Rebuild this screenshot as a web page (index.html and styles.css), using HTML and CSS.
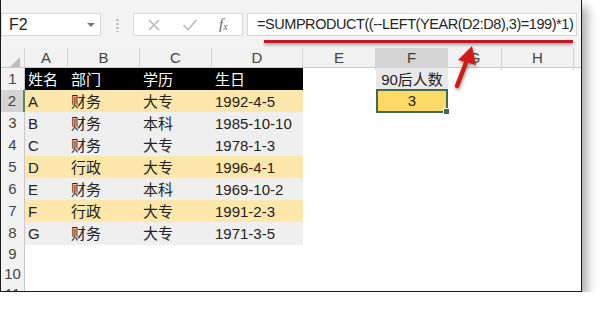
FILE: index.html
```html
<!DOCTYPE html>
<html lang="zh-CN">
<head>
  <meta charset="UTF-8">
  <title>90后人数</title>
  <link rel="stylesheet" href="styles.css">
</head>
<body>
  <div class="window">
    <div class="toolbar">
      <div class="namebox">
        <span class="cellref">F2</span>
        <span class="caret"></span>
      </div>
      <div class="grip"></div>
      <div class="fxbox">
        <svg class="icon" width="14" height="14" viewBox="0 0 14 14">
          <path d="M2 2 L12 12 M12 2 L2 12" stroke="#b9b9b9" stroke-width="1.6" fill="none"/>
        </svg>
        <svg class="icon" width="16" height="14" viewBox="0 0 16 14">
          <path d="M1.5 7 L6 11.5 L14.5 2" stroke="#b9b9b9" stroke-width="1.6" fill="none"/>
        </svg>
        <span class="fx">f<sub>x</sub></span>
      </div>
      <div class="formula">=SUMPRODUCT((--LEFT(YEAR(D2:D8),3)=199)*1)</div>
    </div>

    <div class="sheet">
      <div class="row head">
        <div class="corner"><span class="tri"></span></div>
        <div class="col">A</div>
        <div class="col">B</div>
        <div class="col">C</div>
        <div class="col">D</div>
        <div class="col">E</div>
        <div class="col active">F</div>
        <div class="col">G</div>
        <div class="col">H</div>
        <div class="col last"></div>
      </div>
      <div class="row">
        <div class="num">1</div>
        <div class="cell dark">姓名</div>
        <div class="cell dark">部门</div>
        <div class="cell dark">学历</div>
        <div class="cell dark">生日</div>
        <div class="cell"></div>
        <div class="cell label">90后人数</div>
      </div>
      <div class="row">
        <div class="num active">2</div>
        <div class="cell gold">A</div>
        <div class="cell gold">财务</div>
        <div class="cell gold">大专</div>
        <div class="cell gold">1992-4-5</div>
        <div class="cell"></div>
        <div class="cell result">3<span class="handle"></span></div>
      </div>
      <div class="row">
        <div class="num">3</div>
        <div class="cell grey">B</div>
        <div class="cell grey">财务</div>
        <div class="cell grey">本科</div>
        <div class="cell grey">1985-10-10</div>
      </div>
      <div class="row">
        <div class="num">4</div>
        <div class="cell grey">C</div>
        <div class="cell grey">财务</div>
        <div class="cell grey">大专</div>
        <div class="cell grey">1978-1-3</div>
      </div>
      <div class="row">
        <div class="num">5</div>
        <div class="cell gold">D</div>
        <div class="cell gold">行政</div>
        <div class="cell gold">大专</div>
        <div class="cell gold">1996-4-1</div>
      </div>
      <div class="row">
        <div class="num">6</div>
        <div class="cell grey">E</div>
        <div class="cell grey">财务</div>
        <div class="cell grey">本科</div>
        <div class="cell grey">1969-10-2</div>
      </div>
      <div class="row">
        <div class="num">7</div>
        <div class="cell gold">F</div>
        <div class="cell gold">行政</div>
        <div class="cell gold">大专</div>
        <div class="cell gold">1991-2-3</div>
      </div>
      <div class="row">
        <div class="num">8</div>
        <div class="cell grey">G</div>
        <div class="cell grey">财务</div>
        <div class="cell grey">大专</div>
        <div class="cell grey">1971-3-5</div>
      </div>
      <div class="row short"><div class="num">9</div></div>
      <div class="row short"><div class="num">10</div></div>
      <div class="row short"><div class="num">11</div></div>
    </div>

    <!-- annotation drawn over the screenshot -->
    <div class="underline"></div>
    <svg class="arrow" width="40" height="60" viewBox="0 0 40 60">
      <path d="M8 48 L18 22" stroke="#d11a1a" stroke-width="4.5" stroke-linecap="round" fill="none"/>
      <path d="M23 8 L9 22 L27 27 Z" fill="#d11a1a"/>
    </svg>
  </div>
</body>
</html>
```

FILE: styles.css
```css
body {
  margin: 0;
  background-color: #fff;
  font-family: "Liberation Sans", "Noto Sans CJK SC", sans-serif;
  color: #222;
}

.window {
  position: relative;
  width: 580px;
  height: 291px;
  border: 1px solid #1b1b1b;
  border-top: 0;
  background-color: #fff;
  box-shadow: 5px 7px 10px rgba(0, 0, 0, 0.35);
  overflow: hidden;
}

/* formula bar */
.toolbar {
  display: flex;
  align-items: flex-start;
  height: 48px;
  padding-top: 13px;
  box-sizing: border-box;
  background-color: #f3f3f3;
}

.namebox,
.fxbox,
.formula {
  height: 23px;
  box-sizing: border-box;
  background-color: #fff;
  border: 1px solid #d8d8d8;
}

.namebox {
  display: flex;
  align-items: center;
  justify-content: space-between;
  width: 100px;
  padding: 0 5px 0 7px;
}

.cellref {
  font-size: 16px;
}

.caret {
  width: 0;
  height: 0;
  border-left: 4px solid transparent;
  border-right: 4px solid transparent;
  border-top: 4px solid #777;
}

.grip {
  width: 3px;
  height: 14px;
  margin: 5px 0 0 15px;
  background: radial-gradient(circle, #b5b5b5 1px, transparent 1.3px) 0 0 / 3px 4px;
}

.fxbox {
  display: flex;
  align-items: center;
  width: 110px;
  margin-left: 14px;
  padding-left: 13px;
  gap: 21px;
}

.fx {
  font-family: "Liberation Serif", serif;
  font-style: italic;
  font-size: 15px;
  color: #666;
}

.fx sub {
  font-size: 10px;
  vertical-align: -1px;
}

.formula {
  width: 330px;
  margin-left: 4px;
  padding-left: 9px;
  font-size: 14.5px;
  letter-spacing: -0.45px;
  line-height: 21px;
  color: #262626;
  white-space: nowrap;
}

/* worksheet */
.sheet {
  height: 243px;
  overflow: hidden;
}

.row {
  display: grid;
  grid-template-columns: 24px 43px 72px 72px 91px 73px 72px 54px 72px 1fr;
  height: 22px;
  font-size: 15px;
}

.row.short {
  height: 20px;
}

.row.head {
  height: 20px;
  background-color: #f2f2f2;
  border-bottom: 1px solid #c8c8c8;
  box-sizing: border-box;
}

.corner {
  position: relative;
  border-right: 1px solid #d4d4d4;
}

.tri {
  position: absolute;
  right: 4px;
  bottom: 3px;
  width: 0;
  height: 0;
  border-left: 10px solid transparent;
  border-bottom: 10px solid #bdbdbd;
}

.col {
  text-align: center;
  line-height: 20px;
  color: #444;
  border-right: 1px solid #d4d4d4;
}

.col.active {
  background-color: #d4d4d4;
  border-bottom: 2px solid #5f7f67;
  color: #3c3c3c;
}

.col.last {
  border-right: 0;
}

.num {
  text-align: center;
  line-height: 22px;
  color: #444;
  background-color: #f2f2f2;
  border-right: 1px solid #c8c8c8;
  border-bottom: 1px solid #dcdcdc;
  box-sizing: border-box;
}

.short .num {
  line-height: 20px;
}

.num.active {
  background-color: #d4d4d4;
  border-right: 2px solid #5f7f67;
}

.cell {
  padding-left: 3px;
  line-height: 23px;
  white-space: nowrap;
}

.dark {
  background-color: #000;
  color: #fff;
}

.gold {
  background-color: #fde7aa;
}

.grey {
  background-color: #efefef;
}

.label {
  padding: 0;
  text-align: center;
  background-color: #e9e9e9;
}

.result {
  position: relative;
  padding: 0;
  text-align: center;
  line-height: 19px;
  background-color: #ffd966;
  border: 2px solid #3f6e4c;
  margin-top: -1px;
}

.handle {
  position: absolute;
  right: -4px;
  bottom: -4px;
  width: 5px;
  height: 5px;
  background-color: #3f6e4c;
  border: 1px solid #fff;
}

/* red marks */
.underline {
  position: absolute;
  left: 263px;
  top: 40px;
  width: 309px;
  height: 3px;
  background-color: #c8161d;
  box-shadow: 0 2px 3px rgba(0, 0, 0, 0.35);
}

.arrow {
  position: absolute;
  left: 448px;
  top: 38px;
  filter: drop-shadow(1px 2px 1.5px rgba(0, 0, 0, 0.35));
}
```
